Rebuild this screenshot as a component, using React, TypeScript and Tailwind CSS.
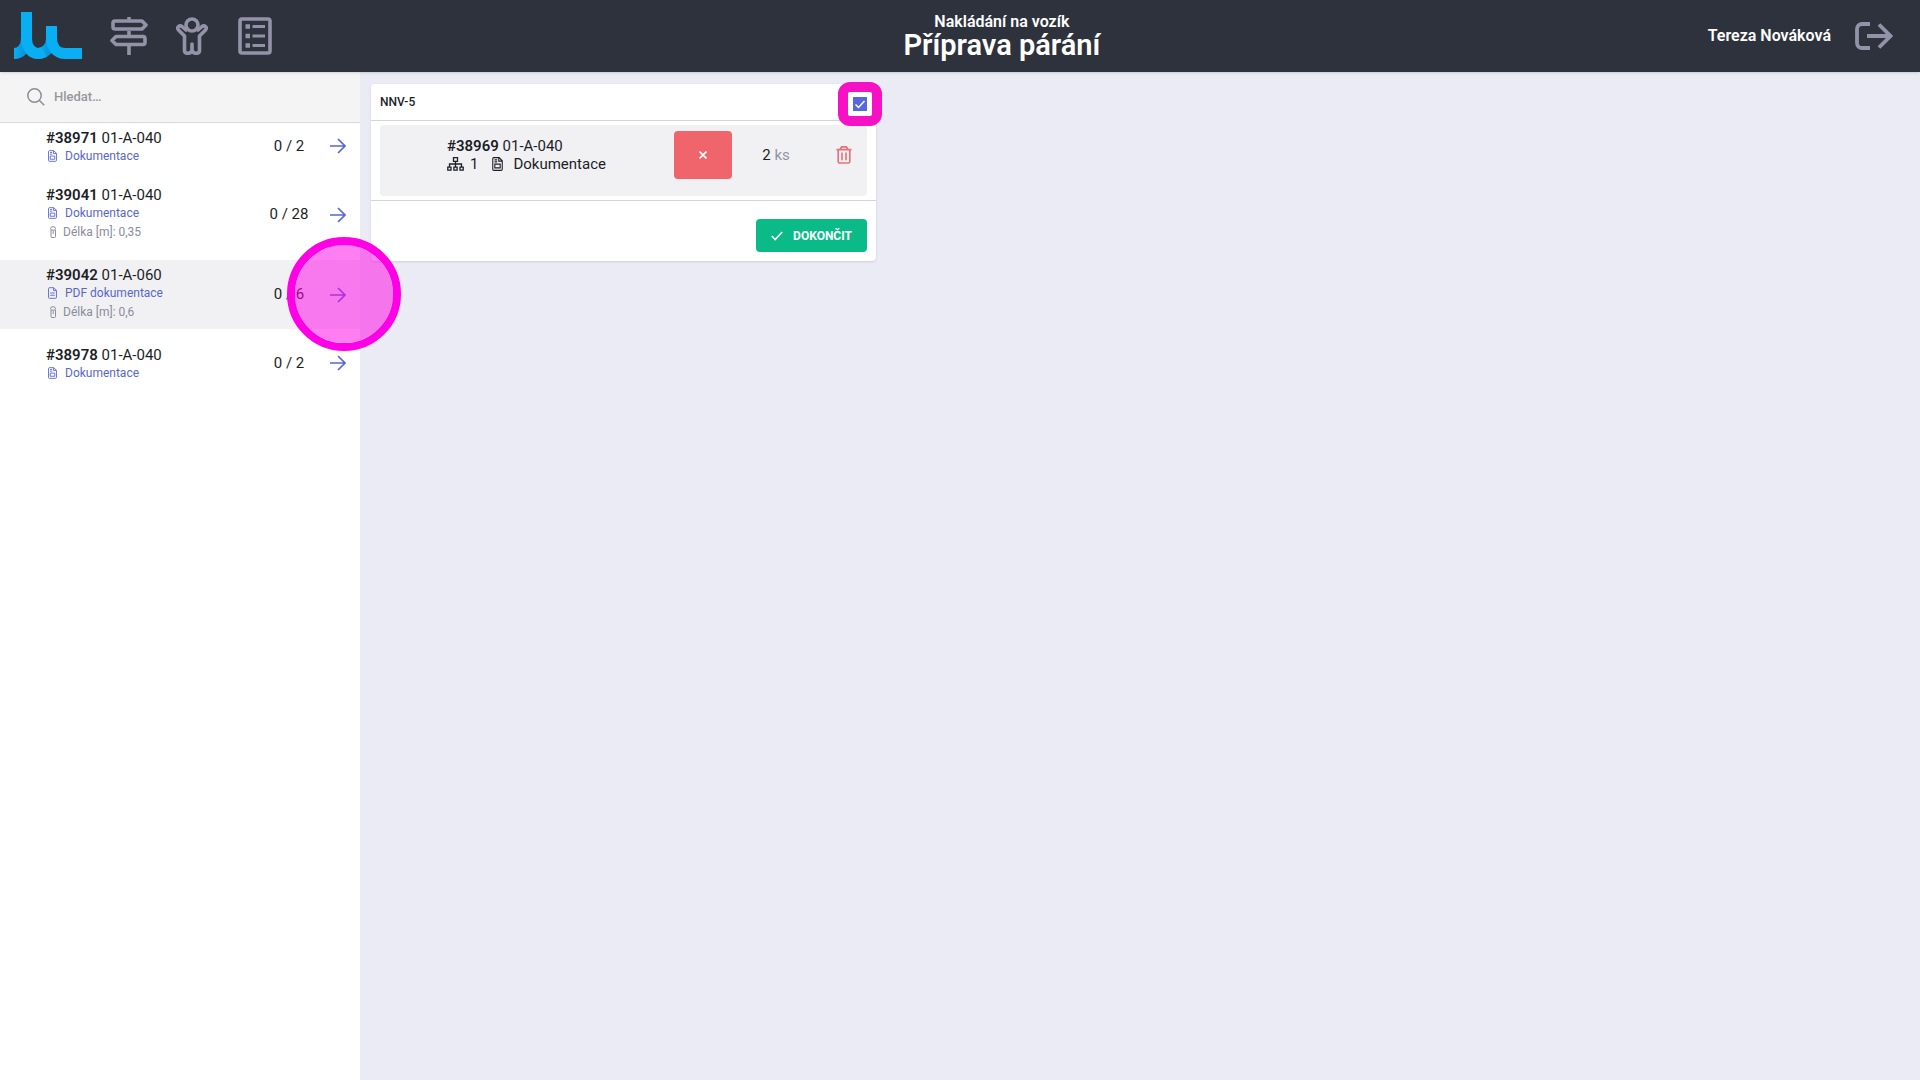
import React from "react";

type Item = {
  id: string;
  code: string;
  doc: string;
  pdf?: boolean;
  length?: string;
  count: string;
  active?: boolean;
};

const items: Item[] = [
  { id: "#38971", code: "01-A-040", doc: "Dokumentace", count: "0 / 2" },
  { id: "#39041", code: "01-A-040", doc: "Dokumentace", length: "0,35", count: "0 / 28" },
  { id: "#39042", code: "01-A-060", doc: "PDF dokumentace", pdf: true, length: "0,6", count: "0 / 6", active: true },
  { id: "#38978", code: "01-A-040", doc: "Dokumentace", count: "0 / 2" },
];

function Logo() {
  return (
    <svg className="w-[68px] h-12" viewBox="0 0 68 48" fill="none" strokeWidth="11">
      <defs>
        <linearGradient id="wave" x1="0" y1="0" x2="1" y2="0">
          <stop offset="0" stopColor="#08aff2" />
          <stop offset="1" stopColor="#0a8fd8" />
        </linearGradient>
      </defs>
      <path d="M0 41.500c7 0 12.500-6 12.500-15" stroke="url(#wave)" />
      <path d="M24 41.500c7 0 13.500-6 13.500-14.500" stroke="url(#wave)" />
      <path d="M12.500 0v27c0 8 5 14.500 11.500 14.500 2 0 4-.4 6-1.500" stroke="#08aff2" />
      <path d="M37.500 14v12c0 9 5 15.500 14 15.500H68" stroke="#08aff2" />
    </svg>
  );
}

function SignpostIcon() {
  return (
    <svg className="w-[38px] h-[38px]" viewBox="0 0 38 38" fill="none" stroke="currentColor" strokeWidth="3.600" strokeLinejoin="round">
      <path d="M19 0v3M19 14v6M19 28v10" />
      <path d="M5 4h27l4 4-4 4H5a2 2 0 0 1-2-2V6a2 2 0 0 1 2-2z" />
      <path d="M33 19.500H6l-4 4 4 4h27a2 2 0 0 0 2-2v-4a2 2 0 0 0-2-2z" />
    </svg>
  );
}

function PersonIcon() {
  return (
    <svg className="w-[32px] h-[38px]" viewBox="0 0 32 38" fill="none" stroke="currentColor" strokeWidth="3.600" strokeLinejoin="round" strokeLinecap="round">
      <circle cx="16" cy="8" r="6" />
      <path d="M10 13L6 9.500C3.500 7.500 .5 10.500 2.500 13L8.500 19v14.500c0 3.500 6 4 7.500 0c1.500 4 7.500 3.500 7.500 0V19l6-6C31.500 10.500 28.500 7.500 26 9.500l-4 3.500M16 27v6.500" />
    </svg>
  );
}

function ListIcon() {
  return (
    <svg className="w-[34px] h-[38px]" viewBox="0 0 34 38" fill="none" stroke="currentColor" strokeWidth="3.600">
      <rect x="2" y="2" width="30" height="34" rx="2" />
      <path d="M7.500 9.500h4.500M7.500 19h4.500M7.500 28.500h4.500" strokeWidth="4.500" />
      <path d="M14.500 9.500H27M14.500 19H27M14.500 28.500H27" strokeWidth="3" />
    </svg>
  );
}

function LogoutIcon() {
  return (
    <svg className="w-[38px] h-7" viewBox="0 0 38 28" fill="none" stroke="currentColor" strokeWidth="3.800">
      <path d="M15 2H7a5 5 0 0 0-5 5v14a5 5 0 0 0 5 5h8M12 14h24M24 2.500L35.500 14 24 25.500" />
    </svg>
  );
}

function DocIcon({ className, pdf }: { className: string; pdf?: boolean }) {
  return (
    <svg className={className} viewBox="0 0 10 13" fill="none" stroke="currentColor" strokeWidth="1">
      <path d="M1.500.6h5L9.400 3.500v7.900a1 1 0 0 1-1 1H1.600a1 1 0 0 1-1-1V1.600a1 1 0 0 1 .9-1zM6.200.8v3h3" />
      {pdf ? <path d="M2.500 6.500h5M2.500 9h5" /> : <path d="M2.200 2.700h2.500M2.200 4.500h2.500M2.500 6.600h5v3.500h-5z" />}
    </svg>
  );
}

function LengthIcon() {
  return (
    <svg className="w-2 h-3" viewBox="0 0 8 12" fill="none" stroke="currentColor" strokeWidth="1">
      <ellipse cx="4" cy="2.500" rx="2.500" ry="1.800" />
      <path d="M2 4v6.500a1 1 0 0 0 1 1h2.500a1 1 0 0 0 1-1V4M4.200 5v3" />
    </svg>
  );
}

function TreeIcon() {
  return (
    <svg className="w-[17px] h-[14px]" viewBox="0 0 17 14" fill="none" stroke="currentColor" strokeWidth="1.300">
      <path d="M6.500.7h4v3.600h-4zM8.500 4.300v6M2.500 10V7h12v3M.8 10.200h3.200v3H.8zM6.900 10.200h3.200v3H6.900zM13 10.200h3.200v3H13z" />
    </svg>
  );
}

function TrashIcon() {
  return (
    <svg className="w-4 h-[18px]" viewBox="0 0 16 18" fill="none" stroke="currentColor" strokeWidth="1.600">
      <path d="M.5 3.600h15M4 3.500l1.600-2.600h4.800L12 3.500M2.200 3.600v12a1.400 1.400 0 0 0 1.400 1.400h8.800a1.400 1.400 0 0 0 1.400-1.400v-12M6 6.500v7.800M10 6.500v7.800" />
    </svg>
  );
}

function ArrowIcon() {
  return (
    <svg className="w-4 h-4" viewBox="0 0 16 16" fill="none" stroke="currentColor" strokeWidth="1.700">
      <path d="M0 8h15M8 1l7 7-7 7" />
    </svg>
  );
}

function Header() {
  return (
    <header className="relative z-10 flex items-center h-[72px] bg-[#2e323d] text-white shadow-sm">
      <nav className="flex items-center w-[296px] pl-[14px] pb-px text-[#9293a8]">
        <a href="#home" aria-label="Domů" className="mr-7">
          <Logo />
        </a>
        <a href="#stations" aria-label="Stanoviště" className="mr-7">
          <SignpostIcon />
        </a>
        <a href="#workers" aria-label="Pracovníci" className="mr-[30px]">
          <PersonIcon />
        </a>
        <a href="#tasks" aria-label="Úkoly">
          <ListIcon />
        </a>
      </nav>
      <div className="flex-1 pb-[2px] text-center font-semibold">
        <p className="text-base leading-5">Nakládání na vozík</p>
        <h1 className="text-[29px] leading-[26px]">Příprava párání</h1>
      </div>
      <div className="flex items-center gap-6 pr-[27px] pb-px">
        <span className="text-base font-semibold">Tereza Nováková</span>
        <button aria-label="Odhlásit" className="text-[#9293a8]">
          <LogoutIcon />
        </button>
      </div>
    </header>
  );
}

function ListRow({ item }: { item: Item }) {
  return (
    <li className={`flex items-center pl-[46px] pr-[14px] ${item.active ? "bg-[#f1f1f4]" : ""}`}>
      <div className="flex-1 pt-[6px] pb-1">
        <p className="text-[15px] leading-[18px]">
          <b className="font-semibold">{item.id}</b> {item.code}
        </p>
        <a href="#doc" className="flex items-center gap-2 pl-[2px] text-[12px] leading-[18px] text-[#5867c9]">
          <DocIcon className="w-[9px] h-3" pdf={item.pdf} />
          {item.doc}
        </a>
        {item.length && (
          <p className="flex items-center gap-[6px] pl-[3px] pb-[3px] text-[12px] leading-5 text-[#8b8c9c]">
            <LengthIcon />
            <span>Délka [m]: {item.length}</span>
          </p>
        )}
      </div>
      <span className="w-20 text-center text-[15px]">{item.count}</span>
      <button aria-label="Přesunout" className="ml-px text-[#5867d8]">
        <ArrowIcon />
      </button>
    </li>
  );
}

function Sidebar() {
  return (
    <aside className="w-[360px] shrink-0 bg-white">
      <label className="flex items-center gap-[9px] h-[51px] pl-[27px] bg-[#f4f4f4] border-b border-[#d9d9de] text-[#8b8c9c]">
        <svg className="w-[18px] h-[18px]" viewBox="0 0 18 18" fill="none" stroke="currentColor" strokeWidth="1.500">
          <circle cx="7.500" cy="7.500" r="6.700" />
          <path d="M12 12l5.200 5.200" />
        </svg>
        <input type="text" aria-label="Hledat" placeholder="Hledat…" className="w-60 text-[13px] font-medium outline-none placeholder:text-[#98989c]" />
      </label>
      <ul className="flex flex-col gap-[11px]">
        {items.map((item) => (
          <ListRow key={item.id} item={item} />
        ))}
      </ul>
    </aside>
  );
}

function CartCard() {
  return (
    <section className="w-[505px] bg-white rounded shadow-sm">
      <div className="flex items-center justify-between h-[37px] pl-[9px] pr-[9px] border-b border-[#d4d4d8]">
        <label htmlFor="cart" className="text-[12px] font-medium">NNV-5</label>
        <div className="relative w-[14px] h-[18px] pt-1">
          <input id="cart" type="checkbox" defaultChecked className="block appearance-none w-[14px] h-[14px] bg-[#5867dd]" />
          <svg className="absolute left-0 bottom-0 w-[14px] h-[14px] pointer-events-none" viewBox="0 0 14 14" fill="none" stroke="white" strokeWidth="1.500">
            <path d="M2.500 7.500l3 3 6-6.500" />
          </svg>
          <span className="absolute -left-[15px] -bottom-[15px] w-11 h-11 border-[10px] border-[#f412c4] rounded-xl pointer-events-none" />
        </div>
      </div>
      <div className="px-[9px] pt-1 pb-1 border-b border-[#d4d4d8]">
        <div className="flex items-start h-[71px] pt-[6px] pl-[67px] bg-[#f1f1f4] rounded">
          <div className="flex-1 pt-[6px] text-[15px] leading-[18px]">
            <p>
              <b className="font-semibold">#38969</b> 01-A-040
            </p>
            <p className="flex items-center">
              <TreeIcon />
              <span className="ml-[6px]">1</span>
              <DocIcon className="w-[11px] h-[14px] ml-[14px] mr-[10px]" />
              <a href="#doc">Dokumentace</a>
            </p>
          </div>
          <button aria-label="Zrušit" className="flex items-center justify-center w-[58px] h-12 bg-[#f0646c] text-white rounded">
            <svg className="w-2 h-2" viewBox="0 0 8 8" stroke="currentColor" strokeWidth="1.600">
              <path d="M.5.5l7 7M7.500.5l-7 7" />
            </svg>
          </button>
          <p className="w-[88px] text-center text-[15px] leading-[48px]">
            2 <span className="text-[#9293a8]">ks</span>
          </p>
          <button aria-label="Smazat" className="flex items-center h-12 ml-4 mr-[15px] text-[#e87078]">
            <TrashIcon />
          </button>
        </div>
      </div>
      <div className="flex justify-end pt-[18px] pb-[9px] pr-[9px]">
        <button className="flex items-center gap-[10px] h-[33px] px-[15px] bg-[#0abb87] text-white text-[12px] font-bold rounded">
          <svg className="w-3 h-[10px]" viewBox="0 0 12 10" fill="none" stroke="currentColor" strokeWidth="1.600">
            <path d="M.8 5l3.400 3.500 7-7.500" />
          </svg>
          DOKONČIT
        </button>
      </div>
    </section>
  );
}

export default function App() {
  return (
    <div className="relative flex flex-col min-h-screen bg-[#ebebf5] text-[#1c1e28] font-[Roboto,sans-serif]">
      <Header />
      <div className="flex flex-1">
        <Sidebar />
        <main className="flex-1 pt-3 pl-[11px]">
          <CartCard />
        </main>
      </div>
      {/* tap marker */}
      <div className="absolute left-[287px] top-[237px] w-[114px] h-[114px] rounded-full border-8 border-[#ff00e6] bg-[#ff00e6]/50 bg-clip-padding pointer-events-none" />
    </div>
  );
}
